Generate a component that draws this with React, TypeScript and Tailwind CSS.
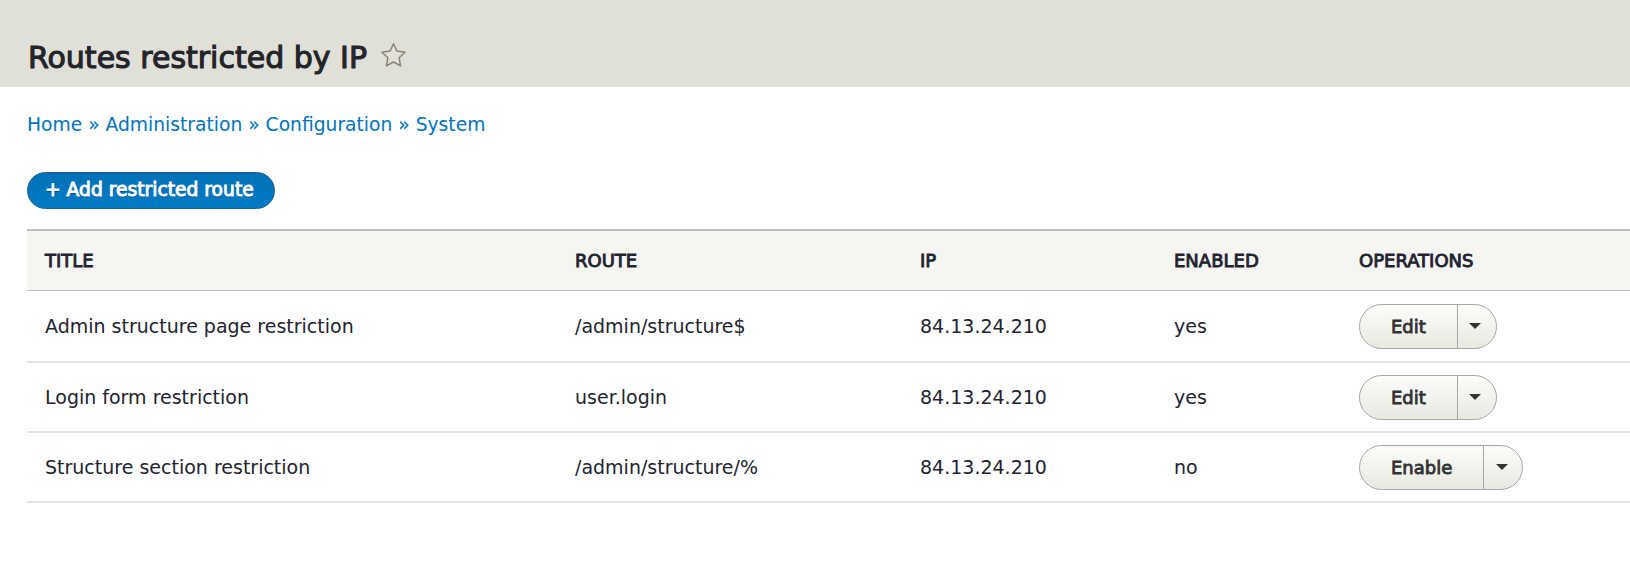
import React from "react";

const rows = [
  { title: "Admin structure page restriction", route: "/admin/structure$", ip: "84.13.24.210", enabled: "yes", op: "Edit" },
  { title: "Login form restriction", route: "user.login", ip: "84.13.24.210", enabled: "yes", op: "Edit" },
  { title: "Structure section restriction", route: "/admin/structure/%", ip: "84.13.24.210", enabled: "no", op: "Enable" },
];

function DropButton({ label }: { label: string }) {
  return (
    <div className="inline-flex h-[45px] rounded-full border border-[#a6a6a6] bg-gradient-to-b from-[#fcfcfa] to-[#e9e9e2] overflow-hidden">
      <span className="flex items-center justify-center px-[31px] text-[18px] text-[#333] [-webkit-text-stroke-width:0.85px]">
        {label}
      </span>
      <span className="flex w-[39px] items-center justify-center border-l border-[#a6a6a6] pr-[3px]">
        <svg width="12" height="6" viewBox="0 0 12 6">
          <polygon points="0,0 12,0 6,6" fill="#333" />
        </svg>
      </span>
    </div>
  );
}

export default function App() {
  return (
    <div className="min-h-[565px] bg-white font-['DejaVu_Sans',sans-serif] text-[#222330]">
      <div className="h-[87px] bg-[#e0e0d8] pl-[28px] pt-[40px]">
        <div className="flex items-start">
          <h1 className="text-[30px] leading-[36px] [-webkit-text-stroke-width:1.1px] text-[#232429]">
            Routes restricted by IP
          </h1>
          <svg className="ml-[13px] mt-[2px]" width="27" height="27" viewBox="0 0 24 24" fill="none" stroke="#858572" strokeWidth="1.3" strokeLinejoin="round">
            <polygon points="12,1.6 15.09,8.06 22.3,9.07 17,14.04 18.3,21.3 12,17.77 5.7,21.3 7,14.04 1.7,9.07 8.91,8.06" />
          </svg>
        </div>
      </div>

      <nav className="mt-[26px] pl-[27px] text-[18.7px] leading-[24px] text-[#0074bd]">
        <a>Home</a> » <a>Administration</a> » <a>Configuration</a> » <a>System</a>
      </nav>

      <div className="mt-[35px] pl-[27px]">
        <button className="h-[37px] rounded-full border border-[#1e5c90] bg-gradient-to-t from-[#007bc6] to-[#0071b8] pl-[17px] pr-[20px] text-[18.7px] text-white [-webkit-text-stroke-width:0.95px] [text-shadow:0_1px_1px_rgba(0,0,0,0.5)]">
          + Add restricted route
        </button>
      </div>

      <div className="ml-[27px] mt-[20px]">
        <div className="grid grid-cols-[530px_345px_254px_185px_1fr] h-[62px] border-t-2 border-b border-t-[#bfbfba] border-b-[#bfbfba] bg-[#f5f5f2] text-[18px] uppercase [-webkit-text-stroke-width:0.9px] text-[#222330]">
          <div className="flex items-center px-[18px]">Title</div>
          <div className="flex items-center px-[18px]">Route</div>
          <div className="flex items-center px-[18px]">IP</div>
          <div className="flex items-center px-[18px]">Enabled</div>
          <div className="flex items-center px-[18px]">Operations</div>
        </div>
        {rows.map((r, i) => (
          <div
            key={i}
            className={`grid grid-cols-[530px_345px_254px_185px_1fr] border-b-2 border-[#e6e4df] text-[19px] ${i === 0 ? "h-[72px]" : "h-[70px]"}`}
          >
            <div className="flex items-center px-[18px]">{r.title}</div>
            <div className="flex items-center px-[18px]">{r.route}</div>
            <div className="flex items-center px-[18px]">{r.ip}</div>
            <div className="flex items-center px-[18px]">{r.enabled}</div>
            <div className="flex items-center px-[18px]">
              <DropButton label={r.op} />
            </div>
          </div>
        ))}
      </div>
    </div>
  );
}
